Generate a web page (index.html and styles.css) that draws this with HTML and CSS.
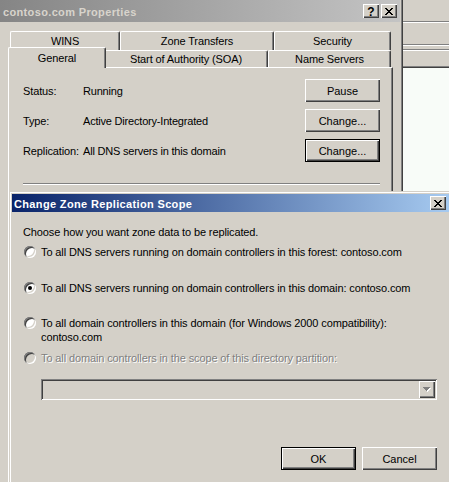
FILE: index.html
```html
<!DOCTYPE html>
<html>
<head>
<meta charset="utf-8">
<link rel="stylesheet" href="styles.css">
</head>
<body>
<div class="screen">
  <div class="bgapp">
    <div class="ba-top"></div>
    <div class="ba-line"></div>
    <div class="ba-bar"></div>
    <div class="ba-line"></div>
    <div class="ba-gap"></div>
    <div class="ba-line"></div>
    <div class="ba-bar2"></div>
    <div class="ba-edge"></div>
    <div class="ba-white"></div>
  </div>

  <div class="props">
    <div class="titlebar inactive">
      <span class="ttext">contoso.com Properties</span>
      <div class="tbtns">
        <span class="tbtn qm">?</span>
        <span class="tbtn"><svg width="8" height="7" viewBox="0 0 8 7" shape-rendering="crispEdges"><path d="M0 0h2v1h-2z M6 0h2v1h-2z M1 1h2v1h-2z M5 1h2v1h-2z M2 2h4v1h-4z M3 3h2v1h-2z M2 4h4v1h-4z M1 5h2v1h-2z M5 5h2v1h-2z M0 6h2v1h-2z M6 6h2v1h-2z" fill="#000"/></svg></span>
      </div>
    </div>
    <div class="tabs">
      <div class="tabrow back">
        <div class="tab t-wins">WINS</div>
        <div class="tab t-zt">Zone Transfers</div>
        <div class="tab t-sec">Security</div>
      </div>
      <div class="tabrow front">
        <div class="tab t-gen sel">General</div>
        <div class="tab t-soa">Start of Authority (SOA)</div>
        <div class="tab t-ns">Name Servers</div>
      </div>
    </div>
    <div class="panel">
      <div class="prow"><span class="lbl">Status:</span><span class="val">Running</span><button class="btn">Pause</button></div>
      <div class="prow"><span class="lbl">Type:</span><span class="val">Active Directory-Integrated</span><button class="btn">Change...</button></div>
      <div class="prow"><span class="lbl">Replication:</span><span class="val">All DNS servers in this domain</span><button class="btn def">Change...</button></div>
      <div class="sep"></div>
    </div>
  </div>

  <div class="dialog">
    <div class="titlebar active">
      <span class="ttext">Change Zone Replication Scope</span>
      <div class="tbtns">
        <span class="tbtn"><svg width="8" height="7" viewBox="0 0 8 7" shape-rendering="crispEdges"><path d="M0 0h2v1h-2z M6 0h2v1h-2z M1 1h2v1h-2z M5 1h2v1h-2z M2 2h4v1h-4z M3 3h2v1h-2z M2 4h4v1h-4z M1 5h2v1h-2z M5 5h2v1h-2z M0 6h2v1h-2z M6 6h2v1h-2z" fill="#000"/></svg></span>
      </div>
    </div>
    <div class="dbody">
      <div class="intro">Choose how you want zone data to be replicated.</div>
      <div class="ropt r1"><span class="radio"></span><span class="rtext">To all DNS servers running on domain controllers in this forest: contoso.com</span></div>
      <div class="ropt r2"><span class="radio on"></span><span class="rtext">To all DNS servers running on domain controllers in this domain: contoso.com</span></div>
      <div class="ropt r3"><span class="radio"></span><span class="rtext">To all domain controllers in this domain (for Windows 2000 compatibility):<br>contoso.com</span></div>
      <div class="ropt r4 dis"><span class="radio"></span><span class="rtext">To all domain controllers in the scope of this directory partition:</span></div>
      <div class="combo">
        <span class="cbtn"><svg width="8" height="5" viewBox="0 0 8 5" shape-rendering="crispEdges"><path transform="translate(1 1)" d="M0 0h7v1h-7z M1 1h5v1h-5z M2 2h3v1h-3z M3 3h1v1h-1z" fill="#fff"/><path d="M0 0h7v1h-7z M1 1h5v1h-5z M2 2h3v1h-3z M3 3h1v1h-1z" fill="#808080"/></svg></span>
      </div>
      <div class="dbtns">
        <button class="btn def">OK</button>
        <button class="btn">Cancel</button>
      </div>
    </div>
  </div>
</div>
</body>
</html>
```

FILE: styles.css
```css
* { box-sizing: border-box; }
body {
  margin: 0;
  background: #d4d0c8;
  font-family: "Liberation Sans", Arial, sans-serif;
  font-size: 11px;
  letter-spacing: -0.12px;
  color: #000;
}
.screen {
  position: relative;
  width: 449px;
  height: 482px;
  overflow: hidden;
  background: #d4d0c8;
}

/* background application on the right */
.bgapp {
  position: absolute;
  left: 403px;
  top: 0;
  width: 46px;
  height: 482px;
  display: flex;
  flex-direction: column;
}
.ba-top { height: 21px; }
.ba-line { height: 2px; border-top: 1px solid #808080; border-bottom: 1px solid #fff; }
.ba-bar { height: 21px; }
.ba-gap { height: 3px; }
.ba-bar2 { height: 15px; }
.ba-edge { height: 2px; border-top: 1px solid #808080; border-bottom: 1px solid #404040; }
.ba-white { flex: 1; background: #f8fcf8; }

/* properties window */
.props {
  position: absolute;
  left: 0;
  top: 0;
  width: 403px;
  height: 482px;
  background: #d4d0c8;
  border-right: 1px solid #404040;
  box-shadow: inset -1px 0 #808080;
  padding-right: 2px;
}
.titlebar {
  display: flex;
  align-items: center;
  justify-content: space-between;
}
.titlebar.inactive {
  height: 22px;
  padding-left: 3px;
  background: linear-gradient(to right, #858585, #c4c4c4);
  color: #d8d4cc;
}
.ttext { font-weight: bold; font-size: 11px; letter-spacing: 0.35px; padding-top: 1px; }
.tbtns { display: flex; gap: 2px; margin-right: 3px; }
.tbtn {
  width: 16px;
  height: 14px;
  background: #d4d0c8;
  display: flex;
  align-items: center;
  justify-content: center;
  box-shadow: inset 1px 1px #fff, inset -1px -1px #404040, inset -2px -2px #808080;
  color: #000;
  letter-spacing: 0;
}
.tbtn.qm { font-weight: bold; font-size: 12px; line-height: 14px; padding-top: 1px; }

.tabs { margin-top: 9px; padding-left: 10px; }
.tabrow { display: flex; width: 381px; }
.back { height: 19px; }
.front { height: 17px; }
.tab {
  display: flex;
  align-items: center;
  justify-content: center;
  background: #d4d0c8;
  border-top: 1px solid #fff;
  border-left: 1px solid #fff;
  border-right: 1px solid #404040;
  box-shadow: inset -1px 0 #808080;
  border-top-left-radius: 2px;
  border-top-right-radius: 2px;
  white-space: nowrap;
}
.back .tab { height: 19px; }
.front .tab { height: 17px; }
.t-wins { width: 110px; }
.t-zt { width: 154px; }
.t-sec { width: 117px; }
.t-gen { width: 94px; }
.t-soa { width: 164px; }
.t-ns { width: 123px; }
.front .tab.sel {
  width: 98px;
  height: 21px;
  margin: -3px -2px 0 -2px;
  position: relative;
  z-index: 2;
  padding-bottom: 1px;
}

.panel {
  margin-left: 8px;
  width: 385px;
  height: 420px;
  border: 1px solid;
  border-color: #fff #404040 #404040 #fff;
  box-shadow: inset -1px 0 #808080;
  padding: 11px 12px 0 14px;
}
.prow { display: flex; align-items: center; height: 23px; padding-top: 1px; }
.prow + .prow { margin-top: 7px; }
.lbl { width: 60px; }
.val { flex: 1; letter-spacing: -0.2px; }
.btn {
  width: 75px;
  height: 23px;
  font-family: inherit;
  font-size: 11px;
  letter-spacing: 0;
  color: #000;
  background: #d4d0c8;
  border: none;
  padding: 0;
  margin: 0;
  box-shadow: inset 1px 1px #fff, inset -1px -1px #404040, inset -2px -2px #808080;
}
.prow .btn { margin-top: -1px; }
.btn.def {
  border: 1px solid #000;
}
.sep {
  margin-top: 21px;
  height: 2px;
  border-top: 1px solid #808080;
  border-bottom: 1px solid #fff;
}

/* dialog */
.dialog {
  position: absolute;
  left: 10px;
  top: 192px;
  width: 441px;
  height: 300px;
  background: #d4d0c8;
  border: 1px solid;
  border-color: #fff #808080 #808080 #fff;
  box-shadow: -1px -1px 0 #d4d0c8, 1px 1px 0 #404040;
  padding: 1px;
  z-index: 5;
}
.titlebar.active {
  height: 18px;
  padding-left: 2px;
  background: linear-gradient(to right, #0a246a, #a6caf0);
  color: #fff;
}
.dialog .tbtns { margin-right: 3px; }
.dbody { padding: 13px 12px 0 11px; line-height: 14px; }
.intro { height: 14px; }
.ropt { display: flex; align-items: flex-start; }
.r1 { margin-top: 6px; }
.r2 { margin-top: 22px; }
.r3 { margin-top: 21px; }
.r4 { margin-top: 7px; }
.radio {
  flex: none;
  width: 12px;
  height: 12px;
  margin: 1px 5px 0 1px;
  border-radius: 50%;
  background: #fff;
  position: relative;
  box-shadow: inset 1px 1px #808080, inset -1px -1px #fff, inset 2px 2px #404040, inset -2px -2px #d4d0c8;
}
.radio.on::after {
  content: "";
  position: absolute;
  left: 4px;
  top: 4px;
  width: 4px;
  height: 4px;
  border-radius: 50%;
  background: #000;
}
.dis .radio { background: #d4d0c8; }
.dis .rtext { color: #808080; text-shadow: 1px 1px 0 #fff; }
.combo {
  margin: 14px 0 0 18px;
  width: 396px;
  height: 21px;
  display: flex;
  justify-content: flex-end;
  padding: 2px;
  background: #d4d0c8;
  box-shadow: inset 1px 1px #808080, inset -1px -1px #fff, inset 2px 2px #404040, inset -2px -2px #d4d0c8;
}
.cbtn {
  width: 16px;
  height: 17px;
  display: flex;
  align-items: center;
  justify-content: center;
  background: #d4d0c8;
  box-shadow: inset 1px 1px #fff, inset -1px -1px #404040, inset -2px -2px #808080;
}
.dbtns {
  margin-top: 47px;
  display: flex;
  justify-content: flex-end;
  gap: 6px;
}
```
